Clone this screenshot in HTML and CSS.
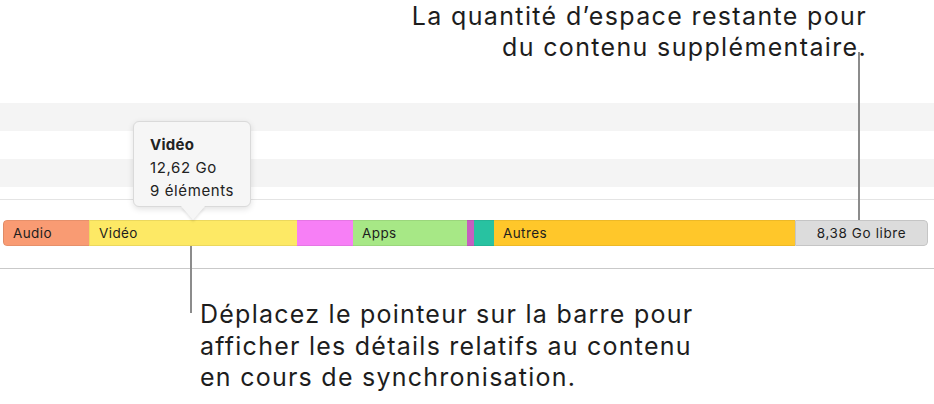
FILE: index.html
```html
<!DOCTYPE html>
<html lang="fr">
<head>
<meta charset="utf-8">
<link rel="stylesheet" href="styles.css">
</head>
<body>
<div class="page">
  <div class="note-top">
    <p class="note-top-text">La quantité d’espace restante pour<br>du contenu supplémentaire.</p>
  </div>
  <div class="rows">
    <div class="row row-alt"></div>
    <div class="row"></div>
    <div class="row row-alt"></div>
    <div class="row row-short"></div>
  </div>
  <div class="bar-area">
    <div class="bar">
      <div class="seg seg-audio" style="width:86px">Audio</div>
      <div class="seg seg-video" style="width:208px">Vidéo</div>
      <div class="seg seg-pink" style="width:56px"></div>
      <div class="seg seg-apps" style="width:114px">Apps</div>
      <div class="seg seg-purple" style="width:7px"></div>
      <div class="seg seg-teal" style="width:20px"></div>
      <div class="seg seg-other" style="width:301px">Autres</div>
      <div class="seg seg-free" style="width:133px">8,38 Go libre</div>
    </div>
  </div>
  <div class="note-bottom">
    <p class="note-bottom-text">Déplacez le pointeur sur la barre pour<br>afficher les détails relatifs au contenu<br>en cours de synchronisation.</p>
  </div>

  <div class="tooltip">
    <div class="tip-title">Vidéo</div>
    <div>12,62 Go</div>
    <div>9 éléments</div>
  </div>
  <div class="leader leader-top"></div>
  <div class="leader leader-bottom"></div>
</div>
</body>
</html>
```
FILE: styles.css
```css
* { box-sizing: border-box; }
html, body { margin: 0; padding: 0; background: #fff; }
body {
  font-family: Inter, "Noto Sans", "Liberation Sans", sans-serif;
  color: #1d1d1d;
}
.page {
  position: relative;
  width: 934px;
  height: 404px;
  overflow: hidden;
}
.note-top {
  height: 103px;
  display: flex;
  justify-content: flex-end;
  padding-right: 67px;
}
.note-top-text {
  margin: 0;
  padding-top: 1px;
  text-align: right;
  font-size: 25px;
  line-height: 31px;
  letter-spacing: 1.35px;
}
.rows {
  display: flex;
  flex-direction: column;
  border-bottom: 1px solid #e4e4e4;
}
.row { height: 28px; }
.row-alt { background: #f4f4f4; }
.row-short { height: 12px; }
.bar-area {
  padding: 20px 0 22px 3px;
  border-bottom: 1px solid #c9c9c9;
}
.bar {
  display: flex;
  height: 26px;
  width: 925px;
  border-radius: 4px;
  overflow: hidden;
}
.seg {
  height: 100%;
  display: flex;
  align-items: center;
  padding-left: 9px;
  font-size: 13.5px;
  letter-spacing: 0.4px;
  color: #1e1e1e;
  white-space: nowrap;
  border: 1px solid rgba(0,0,0,0.07);
  border-left: none;
  border-right: none;
}
.seg-audio { background: #f99b73; border-left: 1px solid rgba(0,0,0,0.1); border-radius: 4px 0 0 4px; }
.seg-video { background: #fde965; border-left: 1px solid rgba(0,0,0,0.06); }
.seg-pink { background: #f77ff6; }
.seg-apps { background: #a7e886; }
.seg-purple { background: #c65fbf; padding: 0; }
.seg-teal { background: #28c2a1; padding: 0; }
.seg-other { background: #ffc72a; }
.seg-free {
  background: #dcdcdc;
  justify-content: center;
  padding-left: 0;
  letter-spacing: 0.6px;
  border: 1px solid #c5c5c5;
  border-radius: 0 4px 4px 0;
}
.note-bottom {
  padding: 30px 0 0 200px;
}
.note-bottom-text {
  margin: 0;
  font-size: 25px;
  line-height: 31.5px;
  letter-spacing: 1.25px;
}
.tooltip {
  position: absolute;
  left: 133px;
  top: 121px;
  width: 118px;
  height: 86px;
  background: #f6f6f6;
  border: 1px solid #dadada;
  border-radius: 6px;
  box-shadow: 0 2px 6px rgba(0,0,0,0.12);
  padding: 11px 0 0 16px;
  font-size: 15px;
  letter-spacing: 0.6px;
  line-height: 23px;
  color: #222;
}
.tip-title { font-weight: 700; letter-spacing: 0.3px; }
.tooltip::after {
  content: "";
  position: absolute;
  left: 47px;
  bottom: -14px;
  width: 0;
  height: 0;
  border-left: 12px solid transparent;
  border-right: 12px solid transparent;
  border-top: 14px solid #f6f6f6;
  filter: drop-shadow(0 2px 1px rgba(0,0,0,0.1));
}
.leader {
  position: absolute;
  width: 2px;
  background: #8c8c8c;
}
.leader-top { left: 858px; top: 52px; height: 168px; }
.leader-bottom { left: 190px; top: 246px; height: 67px; }
```
